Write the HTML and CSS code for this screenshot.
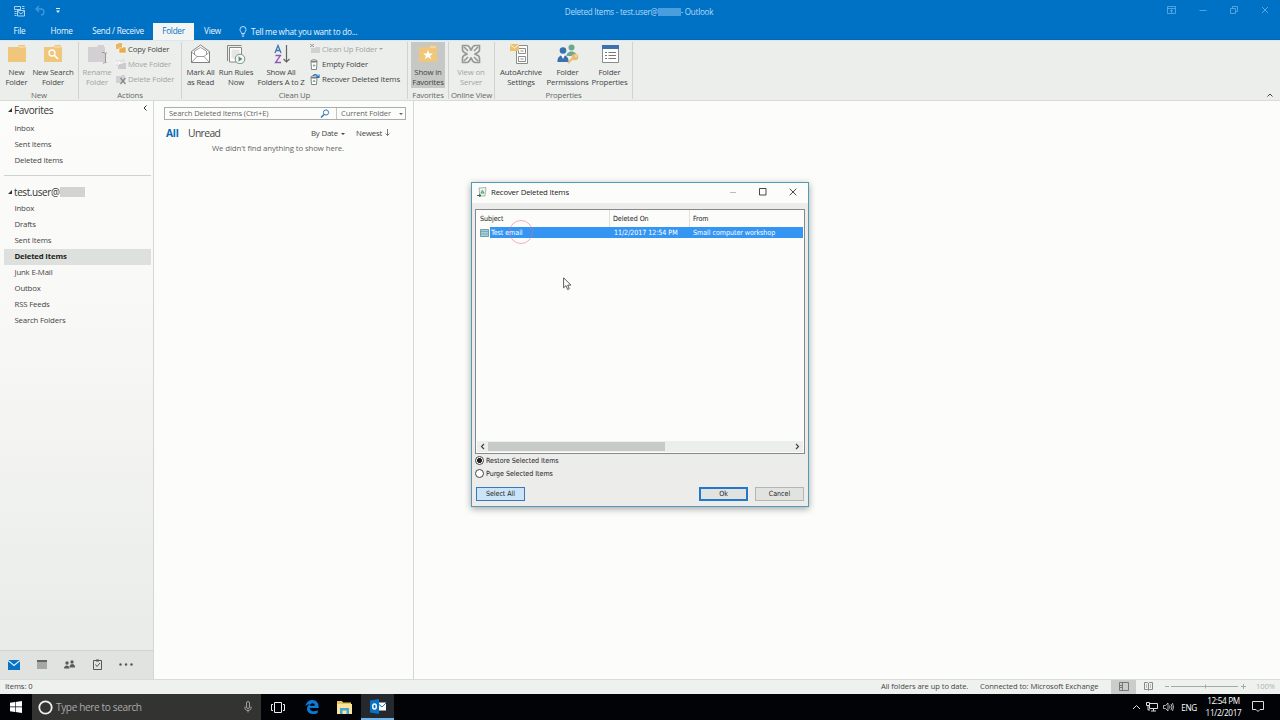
FILE: index.html
```
<!DOCTYPE html>
<html lang="en">
<head>
    <meta charset="UTF-8">
    <meta name="viewport" content="width=device-width, initial-scale=1.0">
    <title>Deleted Items - Outlook</title>
    <link rel="stylesheet" href="styles.css">
</head>
<body>
    <div class="desktop">
        <header class="titlebar">
            <div class="quick-access">
                <svg width="12" height="12" viewBox="0 0 12 12" fill="none" stroke="#d5ebfb" stroke-width=".8"><path d="M1.500 1.500h6v3h-6zM9 1.500h2.500M9 3.500h2.500M1.500 6.500h2M1.500 8.500h2M1.500 10.500h2M4.500 5.500h7v5.500h-7zM4.500 6l3.500 3 3.500-3"/></svg>
                <svg width="10" height="12" viewBox="0 0 10 12" fill="none" stroke="#3f96dc" stroke-width="1.300"><path d="M4 1L1 4l3 3M1.200 4H6c4 0 4 6 0 6"/></svg>
                <svg width="6" height="6" viewBox="0 0 6 6"><path d="M1 0h4v1H1zM1 2.500h4L3 5z" fill="#e2f1fc"/></svg>
            </div>
            <div class="window-title">Deleted Items - test.user@<span class="redacted"></span>- Outlook</div>
            <div class="window-buttons">
                <svg width="9" height="8" viewBox="0 0 9 8" fill="none" stroke="#67aee6" stroke-width=".8"><path d="M.5.5h8v7h-8zM.5 2.500h8M4.500 7V4M3 5.200l1.500-1.400L6 5.200"/></svg>
                <svg width="8" height="8" viewBox="0 0 8 8" stroke="#67aee6" stroke-width=".8"><path d="M.5 4.500h7"/></svg>
                <svg width="8" height="8" viewBox="0 0 8 8" fill="none" stroke="#67aee6" stroke-width=".8"><path d="M.5 2.500h5v5h-5zM2.500 2.500v-2h5v5h-2"/></svg>
                <svg width="8" height="8" viewBox="0 0 8 8" stroke="#67aee6" stroke-width=".9"><path d="M1 1l6 6M7 1L1 7"/></svg>
            </div>
        </header>

        <nav class="tabs">
            <span class="tab tab-file">File</span>
            <span class="tab tab-home">Home</span>
            <span class="tab tab-send">Send / Receive</span>
            <span class="tab tab-folder active">Folder</span>
            <span class="tab tab-view">View</span>
            <span class="tell-me">
                <svg width="8" height="11" viewBox="0 0 8 11" fill="none" stroke="#d5ebfb" stroke-width=".9"><path d="M2.500 7.500C2.500 6 1 5.500 1 3.500a3 3 0 0 1 6 0C7 5.500 5.500 6 5.500 7.500zM2.700 9h2.600M3.200 10.400h1.600"/></svg>
                <span>Tell me what you want to do...</span>
            </span>
        </nav>

        <section class="ribbon">
            <div class="group group-new">
                <div class="group-items">
                    <div class="big-button w33">
                        <svg width="20" height="20" viewBox="0 0 20 20"><path d="M1 3h10l1-2h6v2h1v15H1z" fill="#efc67a"/><path d="M12 3h6" stroke="#f8e8c8"/></svg>
                        <span>New<br>Folder</span>
                    </div>
                    <div class="big-button w40">
                        <svg width="20" height="20" viewBox="0 0 20 20"><path d="M1 3h10l1-2h6v2h1v15H1z" fill="#efc67a"/><path d="M12 3h6" stroke="#f8e8c8"/><circle cx="9" cy="9" r="3" fill="none" stroke="#fff" stroke-width="1.300"/><path d="M11 11l4 4" stroke="#fff" stroke-width="1.700"/></svg>
                        <span>New Search<br>Folder</span>
                    </div>
                </div>
                <div class="group-label">New</div>
            </div>
            <div class="group group-actions">
                <div class="group-items">
                    <div class="big-button w36 disabled">
                        <svg width="20" height="20" viewBox="0 0 20 20"><path d="M1 3h9l1-2h6v2h1v15H1z" fill="#d3cfd3"/><path d="M15 8.500h2l1.500 1L20 8.500M18.500 9v9M16 19h1.500l1-1 1 1" fill="none" stroke="#969696"/></svg>
                        <span>Rename<br>Folder</span>
                    </div>
                    <div class="small-buttons">
                        <div class="small-button">
                            <svg width="12" height="11" viewBox="0 0 12 11"><path d="M1 1h2l1-1h3v6H1z" fill="#e9b763"/><path d="M4 5h3l1-1h3v6H4z" fill="#edaa48" stroke="#fff" stroke-width=".5"/></svg>
                            <span>Copy Folder</span>
                        </div>
                        <div class="small-button disabled">
                            <svg width="12" height="11" viewBox="0 0 12 11"><path d="M1 1h5l1-1h3v3H5v4H1z" fill="#e3e1e3"/><path d="M3 5h4l1-1h3v6H3z" fill="#cdcacf"/><path d="M0 4h4M3 2l2 2-2 2" fill="none" stroke="#fff"/></svg>
                            <span>Move Folder</span>
                        </div>
                        <div class="small-button disabled">
                            <svg width="12" height="11" viewBox="0 0 12 11"><path d="M1 2h5l1-1h3v8H1z" fill="#d3cfd3"/><path d="M5.500 4l5 6M10.500 4l-5 6" stroke="#888" stroke-width="1.200"/></svg>
                            <span>Delete Folder</span>
                        </div>
                    </div>
                </div>
                <div class="group-label">Actions</div>
            </div>
            <div class="group group-cleanup">
                <div class="group-items">
                    <div class="big-button w37">
                        <svg width="20" height="20" viewBox="0 0 20 20" fill="#fff" stroke="#737573" stroke-width=".9"><path d="M.5 7.500L9.500 1l9 6.500V18.500H.5z"/><path d="M3.500 10.500V7l6-3.500 6 3.500v3.500" stroke-width=".7"/><path d="M.5 8l5.500 4.500h7L18.500 8M.5 18.500l5.500-6M18.500 18.500l-5.500-6" fill="none" stroke-width=".7"/></svg>
                        <span>Mark All<br>as Read</span>
                    </div>
                    <div class="big-button w34">
                        <svg width="20" height="20" viewBox="0 0 20 20"><path d="M1.500 17V1.500h14" fill="none" stroke="#858785"/><path d="M3.500 3.500h12V18h-12z" fill="#fff" stroke="#858785"/><path d="M5.500 5.500h8v9h-8z" fill="#e3e6e4"/><circle cx="14" cy="15" r="4.800" fill="#f5f7f5" stroke="#888"/><path d="M12.500 12.300l4 2.700-4 2.700z" fill="#4b9b77"/></svg>
                        <span>Run Rules<br>Now</span>
                    </div>
                    <div class="big-button w56">
                        <svg width="20" height="20" viewBox="0 0 20 20" fill="none"><path d="M4 9l3-7.500L10 9M5 6.500h4" stroke="#3c76b8" stroke-width="1.300"/><path d="M4.500 11.500h5l-5 7h5.500" stroke="#9257b5" stroke-width="1.300"/><path d="M15.500 1v17M12.500 15l3 3 3-3" stroke="#626462" stroke-width="1.200"/></svg>
                        <span>Show All<br>Folders A to Z</span>
                    </div>
                    <div class="small-buttons">
                        <div class="small-button disabled">
                            <svg width="12" height="11" viewBox="0 0 12 11"><path d="M1 1l4 3M5 1L1 4" stroke="#999"/><path d="M2 5h4l1-1h4v6H2z" fill="#d3d0d4"/></svg>
                            <span>Clean Up Folder</span><i class="caret"></i>
                        </div>
                        <div class="small-button">
                            <svg width="12" height="11" viewBox="0 0 12 11" fill="none" stroke="#777" stroke-width=".9"><path d="M2 2.500l.5 8h5l.5-8z" fill="#fff"/><ellipse cx="5" cy="2" rx="3.200" ry="1.200"/><path d="M4 7l1-1.500L6.200 7z" stroke="#4c9c76" stroke-width=".7"/></svg>
                            <span>Empty Folder</span>
                        </div>
                        <div class="small-button">
                            <svg width="12" height="11" viewBox="0 0 12 11" fill="none" stroke="#777" stroke-width=".9"><path d="M2 3.500l.5 7h5l.5-7z" fill="#fff"/><ellipse cx="5" cy="3" rx="3.200" ry="1.200"/><path d="M4 7.500L5 6l1.200 1.500z" stroke="#4c9c76" stroke-width=".7"/><path d="M4 2c1-2 4-2 5 1M7 3.500h3V.5" stroke="#2875bb" stroke-width="1.200"/></svg>
                            <span>Recover Deleted Items</span>
                        </div>
                    </div>
                </div>
                <div class="group-label">Clean Up</div>
            </div>
            <div class="group group-favorites">
                <div class="group-items">
                    <div class="big-button w34 pressed">
                        <svg width="20" height="20" viewBox="0 0 20 20"><path d="M1 3h10l1-2h6v2h1v15H1z" fill="#efc67a"/><path d="M12 3h6" stroke="#f8e8c8"/><path d="M10 6l1.300 3.500H15l-2.900 2.200 1.100 3.600L10 13.100l-3.200 2.200 1.100-3.600L5 9.500h3.700z" fill="#fff"/></svg>
                        <span>Show in<br>Favorites</span>
                    </div>
                </div>
                <div class="group-label">Favorites</div>
            </div>
            <div class="group group-online">
                <div class="group-items">
                    <div class="big-button w44 disabled">
                        <svg width="20" height="20" viewBox="0 0 20 20" fill="none" stroke="#969896" stroke-width="1.600"><path d="M1.500 6V1.500H6c2.500 0 3 3 4 5M14 1.500h4.500V6c0 2.500-3 3-5 4M18.500 14v4.500H14c-2.500 0-3-3-4-5M6 18.500H1.500V14c0-2.500 3-3 5-4M10 6.500c1-2 1.500-5 4-5M13.500 10c2 1 5 1.500 5 4M10 13.500c-1 2-1.500 5-4 5M6.500 10c-2-1-5-1.500-5-4M3 3l4 4M17 3l-4 4M17 17l-4-4M3 17l4-4"/></svg>
                        <span>View on<br>Server</span>
                    </div>
                </div>
                <div class="group-label">Online View</div>
            </div>
            <div class="group group-properties">
                <div class="group-items">
                    <div class="big-button w52">
                        <svg width="24" height="20" viewBox="0 0 24 20"><path d="M7.500 1.500h11v18h-11z" fill="#fff" stroke="#8b8d8b"/><path d="M9.500 4.500h7v5h-7zM9.500 12.500h7v5h-7zM11.500 7h3M11.500 15h3" fill="none" stroke="#8b8d8b"/><path d="M1 0h9v7H1z" fill="#edc071"/><path d="M1 .5l4.500 3.500L10 .5" fill="none" stroke="#fff" stroke-width=".8"/></svg>
                        <span>AutoArchive<br>Settings</span>
                    </div>
                    <div class="big-button w41">
                        <svg width="22" height="20" viewBox="0 0 22 20"><circle cx="14.500" cy="3.500" r="3" fill="#6ba890"/><path d="M9.500 12c0-6 10-6 10 0z" fill="#6ba890"/><circle cx="6" cy="6.500" r="3.300" fill="#3b71b1"/><path d="M.5 18c-1-9 12-9 11 0z" fill="#3b71b1"/><path d="M4 11h4l-2 4z" fill="#fff"/><circle cx="18" cy="13" r="3.300" fill="#e9bc70"/><circle cx="19" cy="12" r=".8" fill="#fff"/><path d="M16 14l-5 5" stroke="#e9bc70" stroke-width="2"/></svg>
                        <span>Folder<br>Permissions</span>
                    </div>
                    <div class="big-button w43">
                        <svg width="20" height="20" viewBox="0 0 20 20"><path d="M2.500 1.500h16v17h-16z" fill="#fff" stroke="#8b8d8b"/><path d="M2 1h17v4H2z" fill="#3d72ae"/><path d="M5 8.500h2M5 11.500h2M5 14.500h2M8.500 8.500H16M8.500 11.500H16M8.500 14.500H16" stroke="#777"/></svg>
                        <span>Folder<br>Properties</span>
                    </div>
                </div>
                <div class="group-label">Properties</div>
            </div>
            <svg class="collapse-ribbon" width="6" height="4" viewBox="0 0 6 4" fill="none" stroke="#444"><path d="M.5 3.500L3 1l2.500 2.500"/></svg>
        </section>

        <main class="workspace">
            <aside class="sidebar">
                <div class="folder-pane">
                    <div class="section-head"><i class="triangle"></i>Favorites
                        <svg class="collapse-pane" width="4" height="6" viewBox="0 0 4 6" fill="none" stroke="#333"><path d="M3.500.5L1 3l2.500 2.500"/></svg>
                    </div>
                    <ul class="folders">
                        <li>Inbox</li>
                        <li>Sent Items</li>
                        <li>Deleted Items</li>
                    </ul>
                    <div class="divider"></div>
                    <div class="section-head account"><i class="triangle"></i>test.user@<span class="redacted"></span></div>
                    <ul class="folders account-folders">
                        <li>Inbox</li>
                        <li>Drafts</li>
                        <li>Sent Items</li>
                        <li class="selected">Deleted Items</li>
                        <li>Junk E-Mail</li>
                        <li>Outbox</li>
                        <li>RSS Feeds</li>
                        <li>Search Folders</li>
                    </ul>
                </div>
                <div class="nav-icons">
                    <svg width="12" height="10" viewBox="0 0 12 10"><path d="M0 0h12v10H0z" fill="#0872c4"/><path d="M0 .5L6 5.500l6-5" fill="none" stroke="#e3f0f8" stroke-width="1.200"/></svg>
                    <svg width="10" height="9" viewBox="0 0 10 9"><path d="M0 0h10v9H0z" fill="#a6a8a6"/><path d="M0 0h10v2H0z" fill="#626462"/></svg>
                    <svg width="11" height="9" viewBox="0 0 11 9" fill="#5a5c5a"><circle cx="3" cy="3" r="1.700"/><path d="M0 8.500c0-4 5.500-4 5.500 0z"/><circle cx="8" cy="2" r="1.700"/><path d="M5.500 7c0-4 5.500-4 5.500 0v.5H6z"/></svg>
                    <svg width="10" height="11" viewBox="0 0 10 11" fill="none" stroke="#565856"><path d="M1.500 1.500h8v9h-8z"/><path d="M4 1.500h3" stroke-width="2"/><path d="M3.500 5.500l1.500 2 3-3.500"/></svg>
                    <svg width="14" height="3" viewBox="0 0 14 3" fill="#555"><circle cx="1.500" cy="1.500" r="1.200"/><circle cx="7" cy="1.500" r="1.200"/><circle cx="12.500" cy="1.500" r="1.200"/></svg>
                </div>
            </aside>

            <section class="message-list">
                <div class="search-row">
                    <div class="search-field"><span>Search Deleted Items (Ctrl+E)</span>
                        <svg width="10" height="9" viewBox="0 0 10 9" fill="none" stroke="#3a76b5"><circle cx="6" cy="3.500" r="2.600"/><path d="M4 5.500L1 8.500" stroke-width="1.500"/></svg>
                    </div>
                    <div class="search-scope"><span>Current Folder</span><i class="caret"></i></div>
                </div>
                <div class="filter-row">
                    <span class="filter-all">All</span>
                    <span class="filter-unread">Unread</span>
                    <span class="sort-by">By Date<i class="caret"></i></span>
                    <span class="sort-order">Newest</span>
                    <svg width="5" height="8" viewBox="0 0 5 8" fill="none" stroke="#555" stroke-width=".8"><path d="M2.500 0v6.500M.5 4.500l2 2 2-2"/></svg>
                </div>
                <p class="empty-message">We didn't find anything to show here.</p>
            </section>
            <section class="reading-pane"></section>
        </main>

        <footer class="statusbar">
            <span class="item-count">Items: 0</span>
            <span class="sync-state">All folders are up to date.</span>
            <span class="connection">Connected to: Microsoft Exchange</span>
            <span class="view-normal"><svg width="10" height="9" viewBox="0 0 10 9" fill="none" stroke="#777"><path d="M.5.5h9v8h-9zM3.500.5v8M1 3.500h2M1 5.500h2"/></svg></span>
            <svg class="view-reading" width="9" height="9" viewBox="0 0 9 9" fill="none" stroke="#888"><path d="M.5.5h3l1 1 1-1h3v7h-3l-1 1-1-1h-3zM4.500 1v7M2 3h1M2 5h1M6 3h1M6 5h1"/></svg>
            <svg class="zoom-slider" width="82" height="7" viewBox="0 0 82 7" stroke="#a7a9a7"><path d="M0 3.500h4M6 3.500h67M40.500 1.500v4M76 3.500h5M78.500 1v5"/></svg>
            <span class="zoom-value">100%</span>
        </footer>

        <footer class="taskbar">
            <div class="start"><svg width="12" height="12" viewBox="0 0 12 12" fill="#fff"><path d="M0 1.700l5-.7v4.600H0zM5.600.9L12 0v5.600H5.600zM0 6.300h5V11l-5-.7zM5.600 6.300H12V12l-6.400-.9z"/></svg></div>
            <div class="task-search">
                <svg width="15" height="15" viewBox="0 0 15 15" fill="none" stroke="#f1f1f1" stroke-width="1.800"><circle cx="7.500" cy="7.500" r="6.200"/></svg>
                <span>Type here to search</span>
                <svg class="mic" width="8" height="12" viewBox="0 0 8 12" fill="none" stroke="#bbb" stroke-width=".8"><rect x="2.500" y=".5" width="3" height="7" rx="1.500"/><path d="M1 5.500v2c0 2.500 6 2.500 6 0v-2M4 9.500v2"/></svg>
            </div>
            <div class="task-icon"><svg width="14" height="11" viewBox="0 0 14 11" fill="none" stroke="#eee"><path d="M3.500.5h7v10h-7zM2 2.500H.5v6H2M12 2.500h1.500v6H12"/></svg></div>
            <div class="task-icon edge"><svg width="14" height="14" viewBox="0 0 14 14"><path d="M.4 6.300C1 2.500 3.700 0 7.300 0c4 0 6.300 2.900 6.300 6.500V8H4.700c.2 3.700 4.800 4.200 8 2.200v2.700C7.500 15.500 2 13.500 2 8.800c0-2.500 1.300-4 3-4.900C3 4 1.400 5 .4 6.300zM4.900 5.800h4.900C9.800 2.400 5.300 2.500 4.900 5.800z" fill="#0b7bd6"/></svg></div>
            <div class="task-icon"><svg width="15" height="13" viewBox="0 0 15 13"><path d="M0 0h5l1 1.500h8V4H0z" fill="#e8c35b"/><path d="M0 3h15v10H0z" fill="#fbe499"/><path d="M3 13V7h9v6H9.500V9.500h-4V13z" fill="#45a7d4"/></svg></div>
            <div class="task-icon outlook"><svg width="16" height="15" viewBox="0 0 16 15"><path d="M8 3.500h8v8H8z" fill="#fff"/><path d="M8.500 5l3.500 3 4-4" fill="none" stroke="#1677c5"/><path d="M0 1.500L9 0v15l-9-1.500z" fill="#0872c6"/><ellipse cx="4.500" cy="7.500" rx="1.800" ry="2.500" fill="none" stroke="#fff" stroke-width="1.400"/></svg></div>
            <div class="tray">
                <svg width="9" height="6" viewBox="0 0 9 6" fill="none" stroke="#ddd"><path d="M1 5l3.500-3.500L8 5"/></svg>
                <svg width="12" height="10" viewBox="0 0 12 10" fill="none" stroke="#ddd"><path d="M3.500 1.500h8v5h-8zM5 9h5M7.500 7v2M.5.5h3v3h-3zM2 3.500V8h2"/></svg>
                <svg width="11" height="10" viewBox="0 0 11 10" fill="none" stroke="#ddd" stroke-width=".8"><path d="M.5 3.500h2L5 1v8L2.500 6.500h-2zM6.500 3.500q1 1.500 0 3M8 2q2 3 0 6M9.500 1q2 4 0 8"/></svg>
                <span class="language">ENG</span>
                <span class="clock">12:54 PM<br>11/2/2017</span>
                <svg width="12" height="12" viewBox="0 0 12 12" fill="none" stroke="#ddd"><path d="M.5.5h11v8H8l-2 2-2-2H.5z"/></svg>
            </div>
        </footer>

        <div class="dialog">
            <div class="dialog-title">
                <svg width="10" height="10" viewBox="0 0 10 10"><path d="M2 1l7-.5L8 9H3z" fill="#edf4ef" stroke="#8b9c93" stroke-width=".7"/><path d="M4 6l1.300-2.500L7 6z" fill="none" stroke="#38a05c"/><path d="M0 8.500h4M2 7l2 1.500L2 10" fill="none" stroke="#466"/></svg>
                <span>Recover Deleted Items</span>
                <div class="dialog-buttons">
                    <svg width="8" height="8" viewBox="0 0 8 8" stroke="#bbb"><path d="M1 4.500h6"/></svg>
                    <svg width="8" height="8" viewBox="0 0 8 8" fill="none" stroke="#333" stroke-width=".9"><path d="M.5.500h6.500v6.500H.5z"/></svg>
                    <svg width="8" height="8" viewBox="0 0 8 8" stroke="#333" stroke-width=".9"><path d="M.7.700l6.600 6.600M7.300.7L.7 7.300"/></svg>
                </div>
            </div>
            <div class="item-list">
                <div class="list-row list-header"><span>Subject</span><span>Deleted On</span><span>From</span></div>
                <div class="list-row list-item">
                    <svg width="9" height="8" viewBox="0 0 9 8"><path d="M.5.5h8v7h-8z" fill="#9fd0dc" stroke="#5a8b99" stroke-width=".8"/><path d="M1 2.500h7M1 5h7" stroke="#6a9ba6" stroke-width=".7"/></svg>
                    <span>Test email</span><span>11/2/2017 12:54 PM</span><span>Small computer workshop</span>
                </div>
                <div class="scrollbar">
                    <svg width="5" height="7" viewBox="0 0 5 7" fill="none" stroke="#444" stroke-width="1.200"><path d="M4 1L1.500 3.500 4 6"/></svg>
                    <div class="thumb"></div>
                    <svg width="5" height="7" viewBox="0 0 5 7" fill="none" stroke="#444" stroke-width="1.200"><path d="M1 1l2.500 2.500L1 6"/></svg>
                </div>
            </div>
            <div class="option"><i class="radio checked"></i>Restore Selected Items</div>
            <div class="option"><i class="radio"></i>Purge Selected Items</div>
            <div class="dialog-actions">
                <button class="select-all">Select All</button>
                <button class="ok">Ok</button>
                <button class="cancel">Cancel</button>
            </div>
        </div>
        <div class="click-ring"></div>
        <svg class="cursor" width="9" height="14" viewBox="0 0 9 14"><path d="M.6.800v10l2.400-2.200 1.600 3.900 1.700-.7-1.600-3.700h3.200z" fill="#fff" stroke="#333" stroke-width=".8"/></svg>
    </div>
</body>
</html>
```
FILE: styles.css
```
* {
    box-sizing: border-box;
}
body {
    margin: 0;
    font-family: "Open Sans", "Noto Sans", sans-serif;
    font-size: 7.8px;
    letter-spacing: -0.18px;
    color: #444;
    overflow: hidden;
}
svg {
    display: block;
    flex: none;
}
.desktop {
    position: relative;
    width: 1280px;
    height: 720px;
    display: flex;
    flex-direction: column;
    background: #fcfdfb;
    white-space: nowrap;
}

/* title bar and tabs */
.titlebar {
    height: 23px;
    display: flex;
    align-items: center;
    justify-content: space-between;
    background: #0072c6;
}
.quick-access {
    width: 300px;
    height: 20px;
    display: flex;
    align-items: center;
    gap: 10px;
    padding: 0 0 2px 13px;
}
.window-title {
    display: flex;
    align-items: center;
    margin-left: -2px;
    font-size: 8.1px;
    letter-spacing: -0.26px;
    color: #b5dcf8;
}
.window-title .redacted {
    width: 23px;
    height: 8px;
    background: #4a9edd;
}
.window-buttons {
    width: 300px;
    height: 20px;
    display: flex;
    align-items: center;
    justify-content: flex-end;
    gap: 23px;
    padding: 0 11px 3px 0;
}
.tabs {
    height: 17px;
    display: flex;
    background: #0072c6;
    border-bottom: 1px solid #0b67ab;
    font-size: 8.2px;
    letter-spacing: -0.26px;
    color: #eaf5fd;
}
.tab {
    text-align: center;
    line-height: 16px;
}
.tab-file { width: 39px; }
.tab-home { width: 45px; }
.tab-send { width: 68px; }
.tab-folder { width: 41px; margin-left: 1px; }
.tab-view { width: 37px; }
.tab.active {
    height: 17px;
    background: #f3f5f3;
    color: #0872c6;
}
.tell-me {
    display: flex;
    align-items: center;
    gap: 4px;
    margin-left: 8px;
}

/* ribbon */
.ribbon {
    height: 61px;
    display: flex;
    background: #eceeec;
    border-top: 1px solid #d4e8f5;
    border-bottom: 1px solid #d9dbd9;
}
.group {
    height: 57px;
    margin-top: 1px;
    display: flex;
    flex-direction: column;
    border-right: 1px solid #d0d2d0;
}
.group-new { width: 79px; }
.group-actions { width: 103px; }
.group-cleanup { width: 226px; }
.group-favorites { width: 41px; padding-left: 3px; }
.group-online { width: 46px; }
.group-properties { width: 138px; }
.group-items {
    height: 46px;
    display: flex;
}
.group-label {
    text-align: center;
    line-height: 14px;
    color: #666;
}
.group-favorites .group-label {
    margin-left: -3px;
}
.big-button {
    display: flex;
    flex-direction: column;
    align-items: center;
    padding-top: 2px;
    text-align: center;
    line-height: 10.500px;
}
.big-button span {
    margin-top: 2.500px;
}
.w33 { width: 33px; }
.w34 { width: 34px; }
.w36 { width: 36px; }
.w37 { width: 37px; }
.w40 { width: 40px; }
.w41 { width: 41px; }
.w43 { width: 43px; }
.w44 { width: 44px; }
.w52 { width: 52px; }
.w56 { width: 56px; }
.pressed {
    height: 46px;
    background: #c6c8c6;
}
.disabled {
    color: #a2a4a2;
}
.small-buttons {
    margin-top: -1px;
}
.small-button {
    height: 15.400px;
    display: flex;
    align-items: center;
    gap: 1px;
}
.caret {
    display: inline-block;
    margin-left: 3px;
    border: 2px solid transparent;
    border-top-color: currentColor;
    border-bottom: 0;
    vertical-align: middle;
}
.small-button .caret {
    margin-left: 1px;
}
.collapse-ribbon {
    align-self: flex-end;
    margin: 0 7px 3px auto;
}

/* folder pane */
.workspace {
    height: 578px;
    display: flex;
}
.sidebar {
    width: 154px;
    display: flex;
    flex-direction: column;
    border-right: 1px solid #d5d7d5;
    background: linear-gradient(#fcfdfb 0%, #f8f9f7 38%, #e8eae8 100%);
}
.folder-pane {
    flex: 1;
    padding: 1px 2px 0 4px;
}
.section-head {
    height: 16px;
    display: flex;
    align-items: center;
    font-size: 10px;
    letter-spacing: -0.35px;
    color: #333;
}
.account {
    letter-spacing: -0.42px;
}
.triangle {
    margin: 0 2px 0 4px;
    border-left: 4px solid transparent;
    border-bottom: 4px solid #333;
}
.collapse-pane {
    margin: -5px 4px 0 auto;
}
.section-head .redacted {
    width: 25px;
    height: 10px;
    background: #d2d4d2;
}
.folders {
    list-style: none;
    margin: 3px 0 0;
    padding: 0;
}
.account-folders {
    margin-top: 1px;
}
.folders li {
    height: 16px;
    line-height: 15px;
    padding-left: 10.500px;
}
.folders .selected {
    background: #dee0de;
    color: #222;
    font-weight: 700;
}
.divider {
    height: 1px;
    margin: 6px 0 8px;
    background: #d0d2d0;
}
.nav-icons {
    height: 29px;
    display: flex;
    align-items: center;
    gap: 17px;
    padding: 0 0 1px 8px;
    background: #e1e3e1;
    border-top: 1px solid #d2d4d2;
}

/* message list */
.message-list {
    width: 260px;
    padding: 6px 7px 0 10px;
    border-right: 1px solid #d5d7d5;
}
.search-row {
    height: 13px;
    display: flex;
    border: 1px solid #abadab;
    font-size: 7.600px;
    letter-spacing: -0.120px;
    line-height: 11px;
    color: #666;
}
.search-field {
    width: 172px;
    display: flex;
    justify-content: space-between;
    align-items: center;
    padding: 0 6px 0 4px;
    border-right: 1px solid #c2c4c2;
}
.search-scope {
    flex: 1;
    display: flex;
    align-items: center;
    justify-content: space-between;
    padding: 0 2px 0 4px;
}
.filter-row {
    height: 21px;
    display: flex;
    align-items: center;
    padding: 5px 0 0 2px;
}
.filter-all {
    width: 22px;
    font-size: 10.200px;
    font-weight: 700;
    color: #0869b5;
}
.filter-unread {
    width: 123px;
    font-size: 10.300px;
    letter-spacing: -0.600px;
}
.sort-by { width: 45px; }
.sort-order { width: 29px; }
.empty-message {
    margin: 0;
    padding-left: 48px;
    line-height: 14px;
    letter-spacing: -0.100px;
    color: #666;
}
.reading-pane {
    flex: 1;
}

/* status bar */
.statusbar {
    height: 15px;
    display: flex;
    align-items: center;
    padding: 0 0 2px 5px;
    background: #eff1ef;
    border-top: 1px solid #d9dbd9;
    font-size: 7.600px;
    letter-spacing: -0.070px;
}
.item-count { width: 876px; }
.sync-state { width: 99px; }
.connection { width: 131px; }
.view-normal {
    width: 25px;
    height: 14px;
    margin-bottom: -2px;
    padding-bottom: 2px;
    display: flex;
    align-items: center;
    justify-content: center;
    background: #cbcdcb;
}
.view-reading { margin-left: 8px; }
.zoom-slider { margin-left: 12px; }
.zoom-value {
    margin-left: 9px;
    color: #b0b2b0;
}

/* taskbar */
.taskbar {
    height: 26px;
    display: flex;
    background: #010307;
    color: #fff;
}
.start {
    width: 32px;
    display: flex;
    align-items: center;
    justify-content: center;
}
.task-search {
    width: 229px;
    display: flex;
    align-items: center;
    padding: 0 9px 0 6px;
    gap: 3px;
    background: #333432;
    font-size: 10.100px;
    letter-spacing: -0.380px;
    color: #aaa;
}
.mic {
    margin-left: auto;
}
.task-icon {
    width: 33px;
    display: flex;
    align-items: center;
    justify-content: center;
}
.edge { margin-left: 1px; }
.outlook {
    background: #25292e;
    border-bottom: 2px solid #70b5e8;
}
.tray {
    margin-left: auto;
    display: flex;
    align-items: center;
    gap: 5px;
    padding-right: 16px;
    font-size: 8.200px;
    letter-spacing: -0.320px;
}
.language { margin-left: 2px; }
.clock {
    width: 37px;
    margin: 0 5px 0 3px;
    line-height: 12px;
    text-align: center;
}

/* recover dialog */
.dialog {
    position: absolute;
    left: 471px;
    top: 182px;
    width: 338px;
    height: 325px;
    padding: 0 4px;
    border: 1px solid #5599b8;
    background: #ecedeb;
    box-shadow: 0 2px 7px rgba(0, 0, 0, 0.35);
    font-family: "DejaVu Sans Condensed", "DejaVu Sans", sans-serif;
    font-stretch: condensed;
    font-size: 7.100px;
    letter-spacing: -0.050px;
    color: #222;
}
.dialog-title {
    height: 20px;
    display: flex;
    align-items: center;
    gap: 4px;
    margin: 0 -4px;
    padding: 0 11px 2px 5px;
    background: #fcfdfb;
    font-family: "Open Sans", "Noto Sans", sans-serif;
    font-stretch: normal;
    font-size: 7.800px;
    letter-spacing: -0.180px;
}
.dialog-buttons {
    display: flex;
    gap: 22px;
    margin-left: auto;
}
.item-list {
    height: 245px;
    display: flex;
    flex-direction: column;
    margin-top: 6px;
    margin-left: -1px;
    margin-right: -1px;
    padding: 0 1px 1px;
    border: 1px solid #85898b;
    background: #fcfdfb;
}
.list-row {
    display: grid;
    grid-template-columns: 133px 80px 1fr;
    align-items: center;
}
.list-header {
    height: 17px;
}
.list-header span {
    height: 17px;
    line-height: 18px;
    padding-left: 3px;
    border-right: 1px solid #e0e2e0;
}
.list-header span:last-child {
    border: 0;
}
.list-item {
    grid-template-columns: 13px 122px 79px 1fr;
    height: 11px;
    color: #fff;
    background: linear-gradient(90deg, transparent 13px, #3595f3 13px);
}
.list-item svg { margin-left: 3px; }
.list-item span { padding-left: 2px; }
.list-item span:nth-child(2) { padding-left: 1px; }
.scrollbar {
    height: 11px;
    display: flex;
    align-items: center;
    margin-top: auto;
    padding: 0 3px;
    background: #eceeec;
}
.scrollbar svg:last-child {
    margin-left: auto;
}
.thumb {
    width: 177px;
    height: 9px;
    margin-left: 3px;
    background: #c8cac8;
}
.option {
    height: 12.500px;
    display: flex;
    align-items: center;
    gap: 2px;
    padding-top: 1px;
    margin-left: -1px;
}
.radio {
    width: 9px;
    height: 9px;
    border: 1px solid #444;
    border-radius: 50%;
    background: #fff;
}
.radio.checked {
    background: radial-gradient(circle, #222 2.200px, #fff 2.700px);
}
.dialog-actions {
    display: flex;
    margin-top: 8px;
}
.dialog-actions button {
    width: 49px;
    height: 14px;
    padding: 0 0 1px;
    border: 1px solid #b4b6b4;
    background: #e1e3e1;
    font: inherit;
    letter-spacing: inherit;
    color: #222;
}
.dialog-actions .select-all {
    border-color: #3878b8;
    background: #cce4f8;
}
.dialog-actions .ok {
    margin-left: auto;
    margin-right: 7px;
    border: 2px solid #2478cc;
}

/* pointer */
.click-ring {
    position: absolute;
    left: 509px;
    top: 220px;
    width: 24px;
    height: 24px;
    border: 1px solid rgba(230, 110, 150, 0.55);
    border-radius: 50%;
}
.cursor {
    position: absolute;
    left: 563px;
    top: 277px;
}
```
